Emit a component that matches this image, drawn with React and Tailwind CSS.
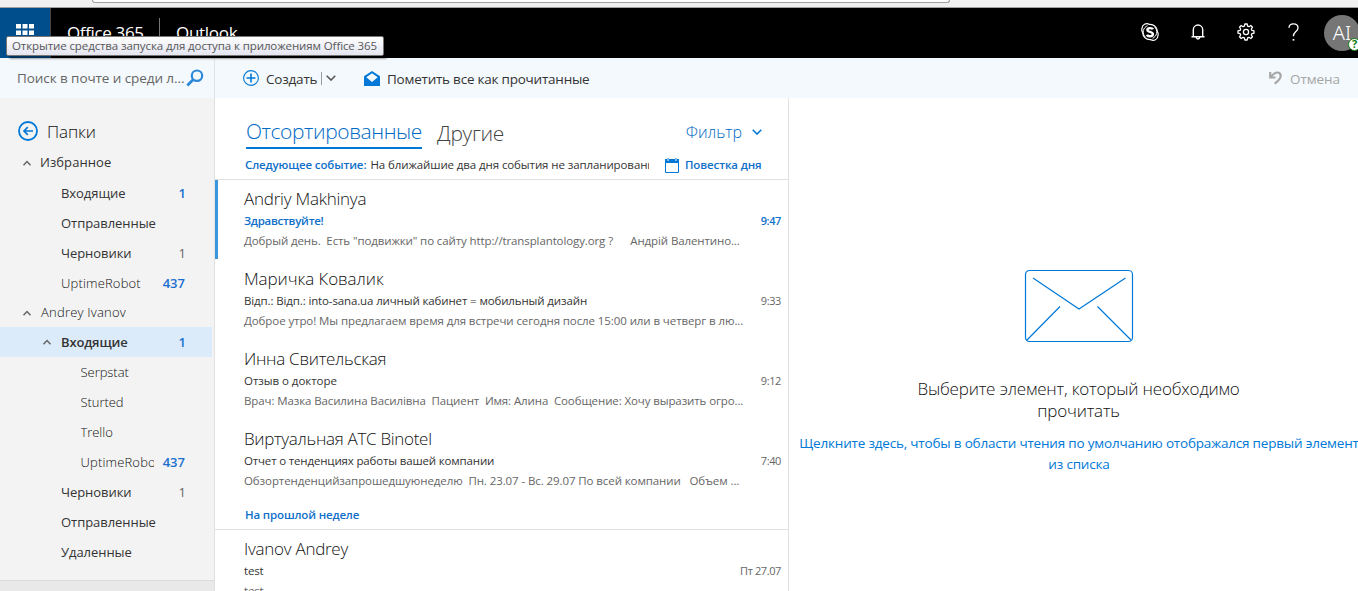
import React from "react";

const Chevron = ({ className, up = false, w = 10, h = 6 }) => (
  <svg className={className} width={w} height={h} viewBox="0 0 10 6" fill="none" stroke="currentColor" strokeWidth="1.5">
    <path d={up ? "M1.500 5.200 5 1.500l3.500 3.700" : "M.7.8 5 5.1 9.3.8"} />
  </svg>
);

const Waffle = () => (
  <svg width="18" height="18" viewBox="0 0 18 18" fill="#fff">
    {[0, 6.5, 13].map((y) => [0, 6.5, 13].map((x) => <rect key={`${x}-${y}`} x={x} y={y} width="5" height="4.5" />))}
  </svg>
);

const Skype = () => (
  <svg width="18" height="18" viewBox="0 0 18 18" fill="none" stroke="#fff">
    <path strokeWidth="1.200" d="M1.600 9.500A5 5 0 0 1 1 5.500 4.800 4.800 0 0 1 8.500 1.500 7.300 7.300 0 0 1 16.400 8.500 5 5 0 0 1 17 12.500 4.800 4.800 0 0 1 9.500 16.500 7.300 7.300 0 0 1 1.600 9.500Z" />
    <path strokeWidth="1" d="M4.200 13.800A6.800 6.800 0 0 1 6.500 2.700M13.800 4.200A6.800 6.800 0 0 1 11.500 15.300" />
    <path strokeWidth="2.400" d="M12 6.300C11.300 4.700 6.400 4.500 6.400 6.900c0 2.500 5.500 1.600 5.500 4.300 0 2.700-5.200 2.500-6 .5" />
  </svg>
);

const Bell = () => (
  <svg width="14" height="16" viewBox="0 0 14 16" fill="none" stroke="#fff" strokeWidth="1.4">
    <path d="M.5 12.800h13M2.300 12.800V5.700a4.700 4.700 0 0 1 9.400 0v7.100M5.300 13.500c.2 1.900 3.200 1.900 3.400 0" />
  </svg>
);

const Gear = () => (
  <svg width="18" height="18" viewBox="0 0 18 18" fill="none" stroke="#fff" strokeWidth="1.300">
    <path strokeLinejoin="round" d="M7.800 1h2.400l.4 2.100 1.400.6 1.800-1.200 1.700 1.700-1.200 1.800.6 1.400 2.100.4v2.400l-2.100.4-.6 1.400 1.200 1.800-1.700 1.700-1.800-1.200-1.400.6-.4 2.100H7.800l-.4-2.100-1.400-.6-1.800 1.200-1.700-1.700 1.200-1.800-.6-1.400L1 10.200V7.800l2.100-.4.6-1.400-1.200-1.800 1.700-1.700L6 3.700l1.400-.6z" />
    <circle cx="9" cy="9" r="2.600" />
  </svg>
);

const Help = () => (
  <svg width="12" height="19" viewBox="0 0 12 19" fill="none" stroke="#fff" strokeWidth="1.300">
    <path d="M1 4.800C1.100 2.300 2.800.9 5.400.9c2.800 0 4.600 1.500 4.600 4 0 3.600-4.600 3.900-4.600 8.300" />
    <path d="M4.600 16.800h1.700" strokeWidth="1.700" />
  </svg>
);

const Search = () => (
  <svg width="18" height="18" viewBox="0 0 18 18" fill="none" stroke="#2b88d8">
    <circle cx="11" cy="6.700" r="5.200" strokeWidth="2.200" />
    <path d="M7 10.700 1.300 16.500" strokeWidth="2.800" />
  </svg>
);

const Plus = () => (
  <svg width="16" height="16" viewBox="0 0 16 16" fill="none" stroke="#0078d7">
    <circle cx="8" cy="8" r="7.400" strokeWidth="1.100" />
    <path d="M8 3.500v9M3.500 8h9" strokeWidth="1.600" />
  </svg>
);

const OpenMail = () => (
  <svg width="16" height="15" viewBox="0 0 16 15">
    <path fill="#0078d7" d="M0 5.300 8 0l8 5.300V15H0z" />
    <path fill="#f4f9fd" d="M8 2.300 13.700 6.200 8 11 2.300 6.200z" />
  </svg>
);

const Undo = () => (
  <svg width="13" height="14" viewBox="0 0 13 14" fill="none" stroke="#a6a6a6" strokeWidth="2.200">
    <path d="M1.200 1v5.500h5.300M1.700 6C4 3.500 5.700 1.500 8.200 1.500c2.300 0 3.500 1.500 3.500 3.400 0 3-2.500 4.700-5.900 7.800" />
  </svg>
);

const Back = () => (
  <svg width="20" height="20" viewBox="0 0 20 20" fill="none" stroke="#0078d7">
    <circle cx="10" cy="10" r="9" strokeWidth="1.800" />
    <path d="M15 10H6M9.800 6.200 6 10l3.800 3.800" strokeWidth="1.700" />
  </svg>
);

const Calendar = () => (
  <svg width="14" height="15" viewBox="0 0 14 15">
    <path fill="#0078d7" d="M0 1h2v1.500h2V1h6v1.500h2V1h2v4H0z" />
    <path fill="#0078d7" d="M2.500 0h1v2h-1zM10.500 0h1v2h-1z" />
    <path d="M.5 4v10.500h13V4" fill="none" stroke="#0078d7" />
  </svg>
);

const Envelope = () => (
  <svg width="110" height="74" viewBox="0 0 110 74" fill="none" stroke="#0078d7" strokeWidth="1.200">
    <rect x="1.500" y="1.500" width="107" height="71" rx="4" />
    <path d="M9 9l46 31L101.500 9M36 37.500 3 71M73.500 37.500 107 71" />
  </svg>
);

const folders = [
  { name: "Входящие", count: "1", hot: true },
  { name: "Отправленные" },
  { name: "Черновики", count: "1" },
  { name: "UptimeRobot", count: "437", hot: true, latin: true },
];

const subfolders = [
  { name: "Serpstat", latin: true, deep: true },
  { name: "Sturted", latin: true, deep: true },
  { name: "Trello", latin: true, deep: true },
  { name: "UptimeRobot", count: "437", hot: true, latin: true, deep: true },
  { name: "Черновики", count: "1" },
  { name: "Отправленные" },
  { name: "Удаленные" },
];

function Folder({ name, count, hot, latin, deep }) {
  const wide = name === "UptimeRobot";
  return (
    <div className={`flex h-[30px] items-center pt-0.5 text-[13px] ${wide ? "pr-[29px]" : "pr-7"} ${deep ? "pl-[80.5px]" : "pl-[61px]"}`}>
      <span className={`overflow-hidden whitespace-nowrap ${deep ? "max-w-[73px]" : ""} ${latin ? "font-light text-[#111]" : ""} ${wide ? "tracking-[0.16px]" : "tracking-[-0.05px]"}`}>{name}</span>
      {count && <span className={`ml-auto ${hot ? "font-semibold text-[#1b6fd0]" : "text-[#666]"}`}>{count}</span>}
    </div>
  );
}

const mails = [
  { from: "Andriy Makhinya", ft: "tracking-[-0.23px]", subject: "Здравствуйте!", st: "tracking-[-0.28px]", time: "9:47", body: 'Добрый день.  Есть "подвижки" по сайту http://transplantology.org ?      Андрій Валентино...', bt: "tracking-[-0.11px]", unread: true },
  { from: "Маричка Ковалик", ft: "tracking-[-0.07px]", subject: "Відп.: Відп.: into-sana.ua личный кабинет = мобильный дизайн", st: "tracking-[-0.13px]", time: "9:33", body: "Доброе утро! Мы предлагаем время для встречи сегодня после 15:00 или в четверг в лю...", bt: "tracking-[-0.09px]" },
  { from: "Инна Свительская", ft: "tracking-[-0.27px]", subject: "Отзыв о докторе", st: "tracking-[-0.05px]", time: "9:12", body: "Врач: Мазка Василина Василівна  Пациент  Имя: Алина  Сообщение: Хочу выразить огро...", bt: "tracking-[-0.11px]" },
  { from: "Виртуальная АТС Binotel", ft: "tracking-[-0.3px]", subject: "Отчет о тенденциях работы вашей компании", st: "tracking-[-0.16px]", time: "7:40", body: "Обзортенденцийзапрошедшуюнеделю  Пн. 23.07 - Вс. 29.07 По всей компании   Объем ...", bt: "tracking-[-0.09px]" },
];

function Mail({ from, ft, subject, st, time, body, bt, unread }) {
  return (
    <article className={`h-20 shrink-0 pr-[7px] ${unread ? "pl-[26px]" : "pl-[29px]"}`}>
      <h3 className={`h-[31px] pt-[7px] text-[17px] leading-6 font-light whitespace-pre text-[#111] ${ft}`}>{from}</h3>
      <div className={`flex h-5 items-center justify-between text-[11.5px] leading-5 whitespace-pre ${unread ? "font-semibold text-[#0f6fc9]" : "text-[#333]"}`}>
        <span className={st}>{subject}</span>
        <span className={`text-[11px] tracking-[-0.4px] ${unread ? "" : "text-[#666]"}`}>{time}</span>
      </div>
      <p className={`h-5 text-[11.5px] leading-5 whitespace-pre text-[#666] ${bt}`}>{body}</p>
    </article>
  );
}

export default function App() {
  return (
    <div className="flex h-[591px] w-[1358px] flex-col overflow-hidden bg-white font-['Open_Sans','Noto_Sans',sans-serif] text-[#333]">
      <div className="h-2 shrink-0 border-b border-[#a0a0a0] bg-[#f0f0f0] pl-[92px]">
        <div className="h-[3px] w-[858px] rounded-b-[3px] border border-t-0 border-[#a0a0a0] bg-white" />
      </div>

      <header className="relative flex h-[50px] shrink-0 bg-black text-white">
        <div className="flex w-[51px] justify-center border-r border-[#444] bg-[#004e8c] pt-4">
          <Waffle />
        </div>
        <div className="flex pt-[13px] pl-4 text-[17px] leading-6">
          <span className="w-[92px] tracking-[-0.35px] whitespace-nowrap">Office 365</span>
          <span className="-mt-[3px] h-8 w-px bg-[#777]" />
          <span className="pl-4 tracking-[-0.3px]">Outlook</span>
        </div>
        <div className="ml-auto flex h-12 items-center">
          <span className="flex w-12 justify-center"><Skype /></span>
          <span className="flex w-12 justify-center"><Bell /></span>
          <span className="flex w-12 justify-center"><Gear /></span>
          <span className="flex w-12 justify-center"><Help /></span>
          <div className="relative mt-0.5 ml-1.5 flex h-9 w-[34px] overflow-hidden">
            <span className="flex h-9 w-9 shrink-0 items-center justify-center rounded-full bg-[#767676] font-['Noto_Sans','Open_Sans',sans-serif] text-xl font-light">AI</span>
            <span className="absolute top-[23px] left-6 flex h-[13px] w-[13px] items-center justify-center rounded-full border border-[#107c10] bg-white text-[11px] font-bold text-[#107c10]">?</span>
          </div>
        </div>
        <div className="absolute top-7 left-1.5 z-10 flex h-5 w-[378px] items-center rounded-[2px] border border-[#767676] bg-linear-to-b from-white to-[#e4e5f0] pl-[5px] text-[11.5px] whitespace-nowrap text-[#575757] shadow-[3px_3px_2px_rgba(0,0,0,0.35)]">
          <span className="tracking-[-0.1px]">Открытие средства запуска для доступа к приложениям Office 365</span>
        </div>
      </header>

      <div className="flex h-10 shrink-0 bg-[#f4f9fd] text-[13.5px]">
        <div className="flex w-[215px] items-center border-r border-[#e1e5e9] pl-[17px]">
          <span className="w-[169px] pt-px tracking-[-0.08px] whitespace-nowrap text-[#666]">Поиск в почте и среди л...</span>
          <Search />
        </div>
        <div className="flex flex-1 items-center pr-[19px] pl-7">
          <Plus />
          <span className="w-[59px] pt-[3px] pl-[7px] tracking-[-0.2px]">Создать</span>
          <span className="ml-[3px] h-[13px] w-px bg-[#999]" />
          <Chevron className="ml-1 text-[#555]" />
          <span className="ml-7 flex"><OpenMail /></span>
          <span className="pt-[3px] pl-[7px] tracking-[-0.23px]">Пометить все как прочитанные</span>
          <span className="ml-auto flex"><Undo /></span>
          <span className="w-[57px] pt-[3px] pl-2 tracking-[-0.1px] text-[#a6a6a6]">Отмена</span>
        </div>
      </div>

      <main className="flex min-h-0 flex-1">
        <nav className="flex w-[215px] shrink-0 flex-col border-r border-[#e1e1e1] bg-[#f3f3f3]">
          <div className="flex h-[50px] items-center pt-4 pl-[18px]">
            <Back />
            <span className="pt-0.5 pl-[9px] text-[17px] leading-6 font-light tracking-[-0.1px] text-[#111]">Папки</span>
          </div>
          <div className="flex h-[30px] items-center pl-[22px] text-[13px]">
            <Chevron up className="text-[#666]" />
            <span className="pl-2 tracking-[0.07px]">Избранное</span>
          </div>
          {folders.map((f) => <Folder key={f.name} {...f} />)}
          <div className="flex h-[29px] items-center pl-[22px] text-[13px]">
            <Chevron up className="text-[#666]" />
            <span className="pl-[9px] font-light tracking-[0.22px] text-[#111]">Andrey Ivanov</span>
          </div>
          <div className="mr-0.5 flex h-[30px] items-center bg-[#dcebf9] pr-[26px] pl-[42px] text-[13px] font-semibold">
            <Chevron up className="text-[#666]" />
            <span className="pt-0.5 pl-[9px] tracking-[-0.15px]">Входящие</span>
            <span className="ml-auto pt-0.5 text-[#1b6fd0]">1</span>
          </div>
          {subfolders.map((f) => <Folder key={f.name} {...f} />)}
          <div className="mt-auto h-[11px] border-t border-[#dcdcdc] bg-[#e9e9e9]" />
        </nav>

        <section className="flex w-[574px] shrink-0 flex-col overflow-hidden border-r border-[#e1e1e1]">
          <div className="flex h-[53px] shrink-0 items-start pt-[19px] pr-[26px] pl-[31px]">
            <h2 className="h-8 w-[176px] border-b-2 border-[#0078d7] text-[21px] leading-[29px] font-light tracking-[-0.43px] whitespace-nowrap text-[#0069c4]">Отсортированные</h2>
            <h2 className="pl-[15px] text-[21px] leading-[33px] font-light tracking-[-0.3px] text-[#444]">Другие</h2>
            <span className="ml-auto pt-px text-base leading-[29px] font-light text-[#0069c4]">Фильтр</span>
            <Chevron className="mt-3 ml-2.5 text-[#0078d7]" />
          </div>
          <div className="flex h-[29px] shrink-0 items-center border-b border-[#e1e1e1] pl-[30px] text-[11.5px] whitespace-nowrap">
            <div className="w-[404px] overflow-hidden">
              <span className="font-semibold tracking-[-0.12px] text-[#0f6fc9]">Следующее событие:</span>
              <span className="pl-1 tracking-[-0.1px]">На ближайшие два дня события не запланированы</span>
            </div>
            <span className="ml-4 flex"><Calendar /></span>
            <span className="pl-1.5 font-semibold tracking-[-0.12px] text-[#0f6fc9]">Повестка дня</span>
          </div>
          <div className="h-[79px] shrink-0 border-l-[3px] border-[#3a96dd]"><Mail {...mails[0]} /></div>
          <div className="mt-px flex flex-col">{mails.slice(1).map((m) => <Mail key={m.from} {...m} />)}</div>
          <div className="flex h-[30px] shrink-0 items-center border-b border-[#e1e1e1] pl-[30px] text-[11.5px] font-semibold tracking-[-0.15px] text-[#0f6fc9]">На прошлой неделе</div>
          <Mail from="Ivanov Andrey" ft="tracking-[-0.27px]" subject="test" st="tracking-[-0.2px]" time="Пт 27.07" body="test" bt="tracking-[-0.2px]" />
        </section>

        <section className="flex min-w-0 flex-1 flex-col items-center pt-[171px] pl-2.5 text-center">
          <Envelope />
          <h1 className="w-[350px] pt-[35px] text-[17px] leading-[22px] font-light tracking-[-0.18px] text-[#111]">Выберите элемент, который необходимо прочитать</h1>
          <p className="pt-[11px] pl-px text-[13.5px] leading-[21px] tracking-[-0.19px] whitespace-nowrap text-[#0078d7]">Щелкните здесь, чтобы в области чтения по умолчанию отображался первый элемент<br />из списка</p>
        </section>
      </main>
    </div>
  );
}
